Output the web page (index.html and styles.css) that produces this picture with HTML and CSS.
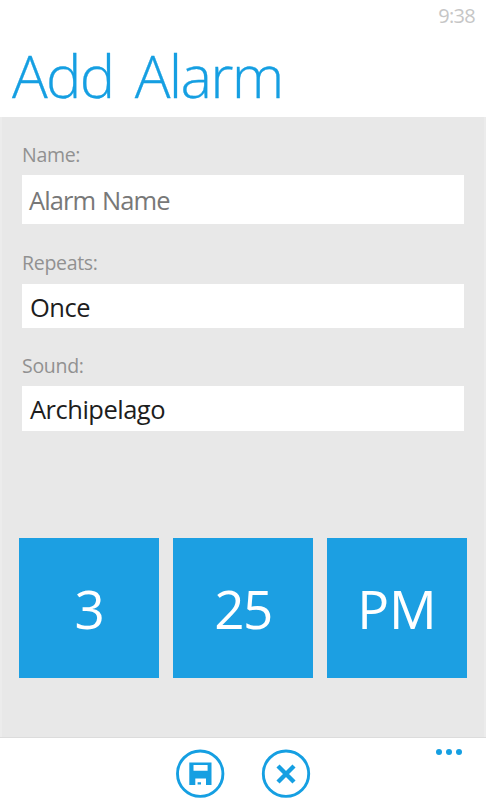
FILE: index.html
```html
<!DOCTYPE html>
<html lang="en">
<head>
<meta charset="utf-8">
<title>Add Alarm</title>
<link rel="stylesheet" href="styles.css">
</head>
<body>
<div class="phone">
  <header class="header">
    <div class="clock">9:38</div>
    <h1 class="title">Add Alarm</h1>
  </header>
  <main class="panel">
    <div class="field field-name">
      <div class="label label-name">Name:</div>
      <div class="box box-input"><span class="placeholder">Alarm Name</span></div>
    </div>
    <div class="field field-repeats">
      <div class="label label-repeats">Repeats:</div>
      <div class="box"><span class="once">Once</span></div>
    </div>
    <div class="field">
      <div class="label label-sound">Sound:</div>
      <div class="box"><span class="sound">Archipelago</span></div>
    </div>
    <div class="tiles">
      <div class="tile"><span class="hour">3</span></div>
      <div class="tile"><span class="minute">25</span></div>
      <div class="tile"><span class="period">PM</span></div>
    </div>
  </main>
  <footer class="appbar">
    <svg class="action" viewBox="0 0 50 50" aria-label="Save">
      <circle cx="25.2" cy="24.7" r="22.7" fill="none" stroke="currentColor" stroke-width="2.9"/>
      <path fill="currentColor" fill-rule="evenodd" d="M14.3 13.5H36.5V36H31V29.5H20.3V36H14.3ZM18.5 16V21.8H32.6V16ZM22.6 33.3H26V35.5H22.6Z"/>
    </svg>
    <svg class="action" viewBox="0 0 50 50" aria-label="Cancel">
      <circle cx="25" cy="24.7" r="22.7" fill="none" stroke="currentColor" stroke-width="2.9"/>
      <path fill="none" stroke="currentColor" stroke-width="4.4" d="M17 17L33 33M33 17L17 33"/>
    </svg>
    <svg class="more" viewBox="0 0 30 8" aria-label="More">
      <g fill="currentColor"><circle cx="5" cy="4" r="3"/><circle cx="15" cy="4" r="3"/><circle cx="25" cy="4" r="3"/></g>
    </svg>
  </footer>
</div>
</body>
</html>
```
FILE: styles.css
```css
* { box-sizing: border-box; }
body { margin: 0; background: #fff; font-family: "Open Sans", "Noto Sans", sans-serif; }
.phone { width: 486px; height: 810px; display: flex; flex-direction: column; overflow: hidden; }
.header { height: 117px; }
.clock { height: 32px; padding-right: 11px; text-align: right; font-size: 20px; line-height: 31px; letter-spacing: -0.7px; color: #c6c6c6; }
.title { margin: 0; padding-left: 12px; font-size: 59.5px; line-height: 85px; font-weight: 300; color: #159fe2; white-space: nowrap; letter-spacing: -1.7px; word-spacing: 7.5px; -webkit-text-stroke: 0.3px #159fe2; }
.panel { height: 620px; padding: 23px 20px 0; background: #e8e8e8; border: solid #ececec; border-width: 0 2px; }
.field { height: 102.5px; }
.field-name { height: 108.5px; }
.label { height: 35px; font-size: 19.5px; line-height: 29px; letter-spacing: -0.3px; color: #919191; white-space: nowrap; }
.label-repeats { line-height: 28px; }
.box { height: 44.5px; padding-left: 8px; background: #fff; font-size: 25.5px; line-height: 46px; letter-spacing: -0.5px; color: #1d1d1d; white-space: nowrap; }
.box-input { height: 48.5px; padding-left: 7px; line-height: 50px; letter-spacing: -0.9px; word-spacing: 1px; color: #787878; }
.tiles { display: flex; gap: 14px; margin: 84px -3px 0; }
.tile { width: 140px; height: 140px; flex: none; background: #1c9fe2; color: #fff; font-size: 53px; line-height: 141px; text-align: center; }
.hour, .minute { letter-spacing: -1.5px; }
.appbar { height: 73px; position: relative; display: flex; justify-content: center; gap: 36px; padding-top: 11px; border-top: 1px solid #dcdcdc; color: #159fe2; background: #fff; }
.action { width: 50px; height: 50px; }
.more { position: absolute; left: 434px; top: 10px; width: 30px; height: 8px; }
```
